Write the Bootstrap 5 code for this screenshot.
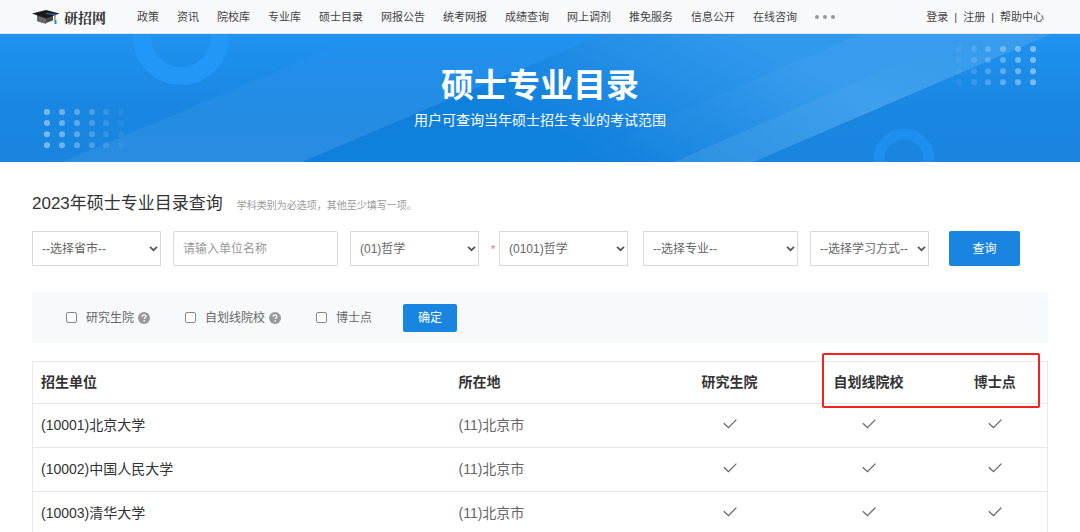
<!DOCTYPE html>
<html lang="zh-CN">
<head>
<meta charset="utf-8">
<meta name="viewport" content="width=device-width, initial-scale=1">
<title>硕士专业目录</title>
<link href="https://cdn.jsdelivr.net/npm/bootstrap@5.3.0/dist/css/bootstrap.min.css" rel="stylesheet">
<style>
  body { font-family: "Liberation Sans", "Noto Sans CJK SC", sans-serif; font-size: 12px; line-height: 18px; color: #666; background: #fff; }
  a { color: inherit; text-decoration: none; }
  .site-bar { min-height: 34px; background: #f8f9fb; border-bottom: 1px solid #dfe5ea; color: #444; font-size: 11px; line-height: 16px; padding: 0 36px 0 32px; }
  .brand-name { font-family: "Noto Serif CJK SC", "Noto Sans CJK SC", serif; font-weight: 700; font-size: 14px; line-height: 20px; color: #333; }
  .site-links { column-gap: 18px; margin-left: 31px; }
  .more-btn { line-height: 0; }
  .user-links { column-gap: 6px; }
  .hero { position: relative; overflow: hidden; min-height: 128px; background: #1985e0; color: #fff; padding-top: 29px; }
  .hero-art { position: absolute; inset: 0; width: 100%; height: 100%; }
  .hero-text { position: relative; }
  .hero h1 { font-size: 33px; line-height: 46px; font-weight: 700; margin: 0; }
  .hero p { font-size: 14px; line-height: 22px; margin: 0; }
  .page-body { padding: 30px 32px 0; }
  .page-body h2 { font-size: 17px; line-height: 24px; font-weight: 400; color: #333; margin: 0; }
  .hint { font-size: 10px; color: #999; margin-left: 14px; }
  .search-row { margin-top: 15px; column-gap: 12px; row-gap: 12px; }
  .search-row .form-select, .search-row .form-control { height: 35px; border: 1px solid #d9d9d9; border-radius: 0; font-size: 12px; line-height: 18px; color: #666; padding: 0 8px 0 9px; }
  .search-row .form-control { width: 165px; border-radius: 2px; }
  .search-row .form-control::placeholder { color: #999; }
  .search-row .form-select { width: 129px; padding-right: 12px; background-color: #fff; background-size: 9px 9px; background-position: right 2px center;
    background-image: url("data:image/svg+xml,%3csvg xmlns='http://www.w3.org/2000/svg' viewBox='0 0 9 9'%3e%3cpath fill='none' stroke='%23555' stroke-width='1.7' d='M1 2.8l3.5 3.4L8 2.8'/%3e%3c/svg%3e"); }
  .search-row .major { width: 155px; margin-left: 3px; }
  .search-row .mode { width: 119px; }
  .required { color: #f56c6c; font-size: 11px; width: 8px; margin-right: -12px; }
  .btn-main { background: #1985e0; border: 0; border-radius: 2px; color: #fff; font-size: 12px; line-height: 18px; padding: 0; }
  .btn-main:hover { background: #1273c6; color: #fff; }
  .btn-search { width: 71px; height: 35px; margin-left: 8px; }
  .btn-ok { width: 54px; height: 28px; margin-left: -4px; }
  .filter-row { margin-top: 26px; min-height: 51px; background: #f7f9fb; padding: 0 34px; column-gap: 35px; }
  .filter-row label { margin-left: 9px; }
  .filter-row .form-check-input { width: 11px; height: 11px; margin: 0; border: 1px solid #888; border-radius: 2px; }
  .help-icon { margin-left: 4px; }
  .result-box { position: relative; margin-top: 18px; }
  .result-table { margin: 0; font-size: 14px; line-height: 20px; table-layout: fixed; border: 1px solid #e8e8e8; }
  .result-table th, .result-table td { height: 44px; padding: 0 8px 2px; vertical-align: middle; border: 0; border-bottom: 1px solid #e8e8e8; color: #666; background: #fff; }
  .result-table thead th { height: 42px; font-weight: 700; color: #333; }
  .result-table td:first-child { color: #333; }
  .result-table td svg { vertical-align: baseline; }
  .col-place { width: 214px; } .col-grad { width: 130px; } .col-self { width: 148px; } .col-doc { width: 105px; }
  .callout-frame { position: absolute; top: -8px; right: 8px; width: 218px; height: 55px; border: 2px solid #f5221b; border-radius: 2px; pointer-events: none; }
</style>
</head>
<body>
<svg class="d-none" aria-hidden="true">
  <symbol id="tick" viewBox="0 0 14 12"><path d="M.8 5.2l4.7 4.4L13.4 1.6" fill="none" stroke="#666" stroke-width="1.3"/></symbol>
  <symbol id="help" viewBox="0 0 12 12"><circle cx="6" cy="6" r="6" fill="#999"/><path d="M4.1 4.7C4.1 3.4 4.9 2.8 6 2.8s1.9.7 1.9 1.7C7.9 5.7 6.2 5.7 6.2 7.1" fill="none" stroke="#fff" stroke-width="1.3"/><circle cx="6.2" cy="8.9" r=".8" fill="#fff"/></symbol>
</svg>

<header class="site-bar d-flex align-items-center">
  <a href="#" class="d-flex align-items-center" aria-label="研招网">
    <svg width="28" height="16" viewBox="0 0 28 16" aria-hidden="true">
      <path d="M5 6v5.500c3 1.800 6 2.400 9 2.500l7-2.500V6z" fill="#4a4a4a"/>
      <path d="M5 7v5l9 3V9z" fill="#686868"/>
      <path d="M0 4.500L14 1l13.500 3.500L14 9.500z" fill="#1b1b1b"/>
      <path d="M14 4.500l9 1v6" fill="none" stroke="#2474c4" stroke-width="1.200"/>
      <path d="M22.500 8h1.500v3h-1.500z" fill="#e8b84a"/><path d="M22.500 11h2v4h-2z" fill="#2783dc"/>
    </svg>
    <span class="brand-name ms-1">研招网</span>
  </a>
  <nav class="site-links d-flex align-items-center text-nowrap" aria-label="主导航">
    <a href="#">政策</a><a href="#">资讯</a><a href="#">院校库</a><a href="#">专业库</a><a href="#">硕士目录</a><a href="#">网报公告</a><a href="#">统考网报</a><a href="#">成绩查询</a><a href="#">网上调剂</a><a href="#">推免服务</a><a href="#">信息公开</a><a href="#">在线咨询</a>
    <button type="button" class="more-btn btn p-0 border-0" aria-label="更多"><svg width="20" height="6" viewBox="0 0 20 6"><g fill="#999"><circle cx="2" cy="3" r="2"/><circle cx="10" cy="3" r="2"/><circle cx="18" cy="3" r="2"/></g></svg></button>
  </nav>
  <div class="user-links d-flex align-items-center text-nowrap ms-auto">
    <a href="#">登录</a><span>|</span><a href="#">注册</a><span>|</span><a href="#">帮助中心</a>
  </div>
</header>

<section class="hero text-center">
  <svg class="hero-art" viewBox="0 0 1080 128" preserveAspectRatio="xMidYMid slice" aria-hidden="true">
    <defs>
      <linearGradient id="sky" x1="0" y1="0" x2="0" y2="1"><stop offset="0" stop-color="#2092f1"/><stop offset=".6" stop-color="#1986e1"/><stop offset="1" stop-color="#1985df"/></linearGradient>
      <linearGradient id="bandA" x1="0" y1="1" x2="0" y2="0"><stop offset="0" stop-color="#fff" stop-opacity=".07"/><stop offset=".5" stop-color="#fff" stop-opacity=".04"/><stop offset="1" stop-color="#fff" stop-opacity="0"/></linearGradient>
      <linearGradient id="deep" gradientUnits="userSpaceOnUse" x1="560" y1="105" x2="640" y2="-50"><stop offset="0" stop-color="#1080dd"/><stop offset="1" stop-color="#3199ec"/></linearGradient>
      <linearGradient id="bandB" gradientUnits="userSpaceOnUse" x1="640" y1="128" x2="740" y2="0"><stop offset="0" stop-color="#fff" stop-opacity=".01"/><stop offset="1" stop-color="#fff" stop-opacity=".03"/></linearGradient>
      <linearGradient id="bandC" x1="0" y1="1" x2="1" y2="0"><stop offset="0" stop-color="#fff" stop-opacity=".09"/><stop offset=".8" stop-color="#fff" stop-opacity="0"/></linearGradient>
    </defs>
    <path fill="url(#sky)" d="M0 0h1080v128H0z"/>
    <path fill="url(#bandA)" d="M62 128L366 0h238L302 128z"/>
    <path fill="url(#deep)" d="M302 128L604 0h447L753 128z"/>
    <path fill="url(#bandB)" d="M563 128L861 0h190L753 128z"/>
    <path fill="url(#bandC)" d="M674 128L966 0h85L753 128z"/>
    <circle cx="181" cy="3" r="39" fill="none" stroke="#2397f7" stroke-width="18"/>
    <circle cx="904" cy="125" r="25" fill="none" stroke="#1d8fef" stroke-width="11"/>
    <g id="dots" fill="none" stroke="#fff" stroke-width="6" stroke-linecap="round" stroke-dasharray="0 11.100">
      <path d="M47 78v34" opacity=".42"/><path d="M62 78v34" opacity=".37"/><path d="M77 78v34" opacity=".29"/><path d="M92 78v34" opacity=".21"/><path d="M106 78v34" opacity=".13"/><path d="M121 78v34" opacity=".06"/>
    </g>
    <use href="#dots" transform="translate(1080 -63) scale(-1 1)"/>
  </svg>
  <div class="hero-text">
    <h1>硕士专业目录</h1>
    <p>用户可查询当年硕士招生专业的考试范围</p>
  </div>
</section>

<main class="page-body">
  <div class="d-flex align-items-baseline flex-wrap">
    <h2>2023年硕士专业目录查询</h2><span class="hint">学科类别为必选项，其他至少填写一项。</span>
  </div>

  <form onsubmit="return false">
    <div class="search-row d-flex flex-wrap align-items-center">
      <select class="form-select" aria-label="省市"><option>--选择省市--</option></select>
      <input type="text" class="form-control" placeholder="请输入单位名称" aria-label="单位名称">
      <select class="form-select" aria-label="学科门类"><option>(01)哲学</option></select>
      <span class="required">*</span>
      <select class="form-select" aria-label="学科类别" required><option>(0101)哲学</option></select>
      <select class="form-select major" aria-label="专业"><option>--选择专业--</option></select>
      <select class="form-select mode" aria-label="学习方式"><option>--选择学习方式--</option></select>
      <button type="submit" class="btn btn-main btn-search">查询</button>
    </div>

    <div class="filter-row d-flex flex-wrap align-items-center">
      <div class="d-flex align-items-center">
        <input type="checkbox" class="form-check-input" id="grad"><label for="grad">研究生院</label>
        <svg class="help-icon" width="12" height="12" aria-hidden="true"><use href="#help"/></svg>
      </div>
      <div class="d-flex align-items-center">
        <input type="checkbox" class="form-check-input" id="self"><label for="self">自划线院校</label>
        <svg class="help-icon" width="12" height="12" aria-hidden="true"><use href="#help"/></svg>
      </div>
      <div class="d-flex align-items-center">
        <input type="checkbox" class="form-check-input" id="doc"><label for="doc">博士点</label>
      </div>
      <button type="button" class="btn btn-main btn-ok">确定</button>
    </div>
  </form>

  <div class="result-box">
    <table class="table result-table">
      <colgroup><col><col class="col-place"><col class="col-grad"><col class="col-self"><col class="col-doc"></colgroup>
      <thead>
        <tr><th scope="col">招生单位</th><th scope="col">所在地</th><th scope="col" class="text-center">研究生院</th><th scope="col" class="text-center">自划线院校</th><th scope="col" class="text-center">博士点</th></tr>
      </thead>
      <tbody>
        <tr><td><a href="#">(10001)北京大学</a></td><td>(11)北京市</td><td class="text-center"><svg width="14" height="12" role="img" aria-label="是"><use href="#tick"/></svg></td><td class="text-center"><svg width="14" height="12" role="img" aria-label="是"><use href="#tick"/></svg></td><td class="text-center"><svg width="14" height="12" role="img" aria-label="是"><use href="#tick"/></svg></td></tr>
        <tr><td><a href="#">(10002)中国人民大学</a></td><td>(11)北京市</td><td class="text-center"><svg width="14" height="12" role="img" aria-label="是"><use href="#tick"/></svg></td><td class="text-center"><svg width="14" height="12" role="img" aria-label="是"><use href="#tick"/></svg></td><td class="text-center"><svg width="14" height="12" role="img" aria-label="是"><use href="#tick"/></svg></td></tr>
        <tr><td><a href="#">(10003)清华大学</a></td><td>(11)北京市</td><td class="text-center"><svg width="14" height="12" role="img" aria-label="是"><use href="#tick"/></svg></td><td class="text-center"><svg width="14" height="12" role="img" aria-label="是"><use href="#tick"/></svg></td><td class="text-center"><svg width="14" height="12" role="img" aria-label="是"><use href="#tick"/></svg></td></tr>
      </tbody>
    </table>
    <div class="callout-frame"></div>
  </div>
</main>
<script src="https://cdn.jsdelivr.net/npm/bootstrap@5.3.0/dist/js/bootstrap.bundle.min.js"></script>
</body>
</html>
